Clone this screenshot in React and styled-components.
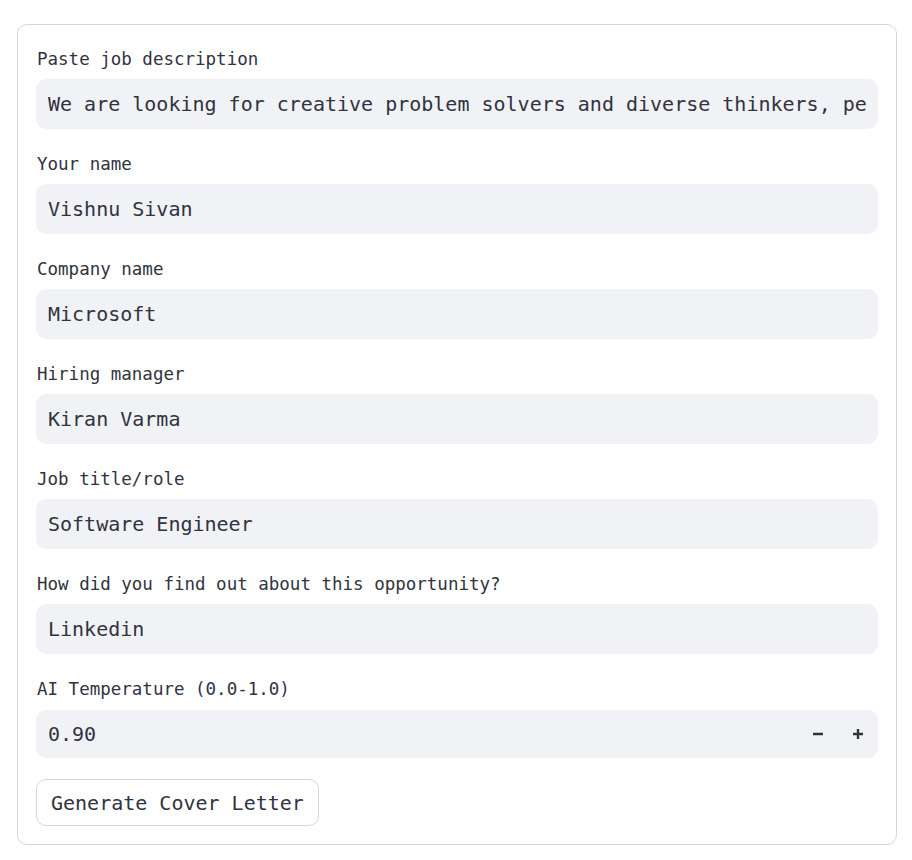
import React from 'react';
import styled, { createGlobalStyle } from 'styled-components';

const GlobalStyle = createGlobalStyle`
  html, body {
    margin: 0;
    padding: 0;
    background: #ffffff;
  }
  body {
    font-family: "DejaVu Sans Mono", "Liberation Mono", monospace;
    color: #31333f;
  }
  * {
    box-sizing: border-box;
  }
`;

const Page = styled.div`
  padding: 24px 0 0 17px;
`;

const Form = styled.form`
  width: 880px;
  border: 1px solid #d6d6d9;
  border-radius: 10px;
  padding: 19px 18px 18px 18px;
  display: flex;
  flex-direction: column;
  gap: 20px;
`;

const Field = styled.div`
  display: flex;
  flex-direction: column;
`;

const Label = styled.label`
  height: 30px;
  margin-bottom: ${({ $gap }) => $gap || 5}px;
  padding-left: 1px;
  display: flex;
  align-items: center;
  font-size: 17.5px;
  color: #31333f;
  white-space: nowrap;
`;

const TextInput = styled.input`
  width: 100%;
  height: 50px;
  border: none;
  outline: none;
  border-radius: 10px;
  background: #f0f2f6;
  padding: 0 12px;
  font-family: inherit;
  font-size: 20px;
  color: #31333f;
`;

const NumberBox = styled.div`
  display: flex;
  align-items: center;
  height: 48px;
  border-radius: 10px;
  background: #f0f2f6;
  overflow: hidden;
`;

const NumberValue = styled.input`
  flex: 1;
  min-width: 0;
  height: 100%;
  border: none;
  outline: none;
  background: transparent;
  padding: 0 12px;
  font-family: inherit;
  font-size: 20px;
  color: #31333f;
`;

const StepButton = styled.button`
  width: 40px;
  height: 100%;
  border: none;
  background: transparent;
  padding: 0;
  display: flex;
  align-items: center;
  justify-content: center;
  color: #31333f;
  cursor: pointer;
`;

const Submit = styled.button`
  align-self: flex-start;
  margin-top: ${({ $offset }) => $offset || 0}px;
  height: 47px;
  padding: 0 14px;
  border: 1px solid #d6d6d9;
  border-radius: 10px;
  background: #ffffff;
  font-family: inherit;
  font-size: 20px;
  color: #31333f;
  cursor: pointer;
`;

const fields = [
  {
    label: 'Paste job description',
    value:
      'We are looking for creative problem solvers and diverse thinkers, people who want to make an impact',
  },
  { label: 'Your name', value: 'Vishnu Sivan' },
  { label: 'Company name', value: 'Microsoft' },
  { label: 'Hiring manager', value: 'Kiran Varma' },
  { label: 'Job title/role', value: 'Software Engineer' },
  { label: 'How did you find out about this opportunity?', value: 'Linkedin' },
];

const Minus = () => (
  <svg width="12" height="12" viewBox="0 0 12 12">
    <path d="M1 6h10" stroke="currentColor" strokeWidth="2.6" />
  </svg>
);

const Plus = () => (
  <svg width="12" height="12" viewBox="0 0 12 12">
    <path d="M1 6h10M6 1v10" stroke="currentColor" strokeWidth="2.4" />
  </svg>
);

const App = () => {
  return (
    <Page>
      <GlobalStyle />
      <Form onSubmit={(e) => e.preventDefault()}>
        {fields.map((f) => (
          <Field key={f.label}>
            <Label>{f.label}</Label>
            <TextInput defaultValue={f.value} />
          </Field>
        ))}
        <Field>
          <Label $gap={6}>AI Temperature (0.0-1.0)</Label>
          <NumberBox>
            <NumberValue defaultValue="0.90" />
            <StepButton type="button">
              <Minus />
            </StepButton>
            <StepButton type="button">
              <Plus />
            </StepButton>
          </NumberBox>
        </Field>
        <Submit type="submit" $offset={1}>
          Generate Cover Letter
        </Submit>
      </Form>
    </Page>
  );
};

export default App;
